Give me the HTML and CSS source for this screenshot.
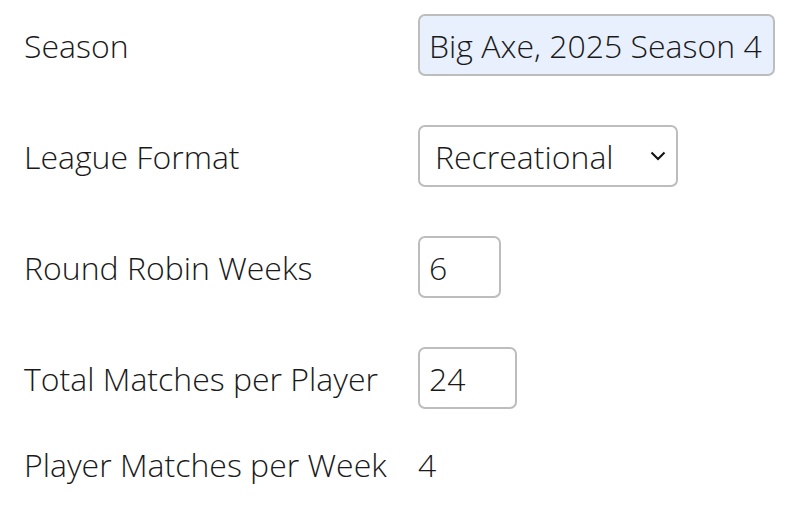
FILE: index.html
```html
<!DOCTYPE html>
<html lang="en">
<head>
    <meta charset="UTF-8">
    <meta name="viewport" content="width=device-width, initial-scale=1.0">
    <title>League Setup</title>
    <link rel="stylesheet" href="styles.css">
</head>
<body>
    <form class="settings">
        <div class="row">
            <label for="season">Season</label>
            <input type="text" id="season" class="field season" value="Big Axe, 2025 Season 4">
        </div>
        <div class="row">
            <label for="format">League Format</label>
            <select id="format" class="field format">
                <option>Recreational</option>
                <option>Competitive</option>
            </select>
        </div>
        <div class="row">
            <label for="weeks">Round Robin Weeks</label>
            <input type="text" id="weeks" class="field weeks" value="6">
        </div>
        <div class="row">
            <label for="matches">Total Matches per Player</label>
            <input type="text" id="matches" class="field matches" value="24">
        </div>
        <div class="row static">
            <span class="label">Player Matches per Week</span>
            <span class="value">4</span>
        </div>
    </form>
</body>
</html>
```

FILE: styles.css
```css
body {
    margin: 0;
    padding: 14px 24px;
    font-family: 'Open Sans', sans-serif;
    font-weight: 300;
    font-size: 32px;
    color: #1a1a1a;
    background: #fff;
}

.settings {
    display: flex;
    flex-direction: column;
}

.row {
    display: grid;
    grid-template-columns: 394px auto;
    align-items: center;
}

.row + .row {
    margin-top: 49px;
}

.row.static {
    margin-top: 37px;
    line-height: 38px;
}

.field {
    box-sizing: border-box;
    height: 62px;
    font-family: inherit;
    font-weight: 300;
    font-size: 32px;
    color: #1a1a1a;
    border: 2px solid #bdbdbd;
    border-radius: 7px;
    padding: 0 9px;
    background: #fff;
    outline: none;
}

.season {
    width: 357px;
    background: #e8f0fe;
}

.format {
    width: 260px;
    padding: 0 12px 0 15px;
    appearance: none;
    background: #fff url("data:image/svg+xml,%3Csvg xmlns='http://www.w3.org/2000/svg' width='16' height='10' viewBox='0 0 16 10'%3E%3Cpath d='M1.5 1.5l6.5 6.5 6.5-6.5' fill='none' stroke='%23111' stroke-width='2'/%3E%3C/svg%3E") no-repeat right 10px center;
}

.weeks {
    width: 83px;
}

.matches {
    width: 99px;
}
```
